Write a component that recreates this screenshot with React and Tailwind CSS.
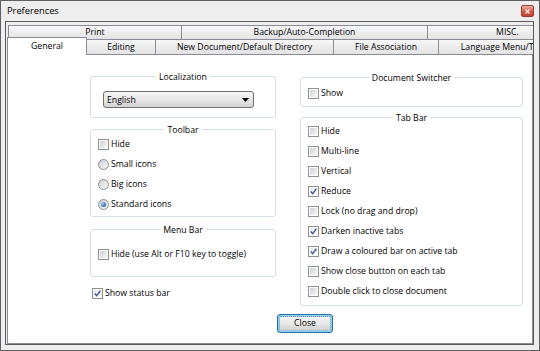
import React from "react";

function GroupBox({ title, className, children }) {
  return (
    <div className={"border border-[#d5dfe5] rounded-[3px] " + className}>
      <div className="-mt-[6px] mx-auto w-fit px-[3px] bg-white leading-[12px]">{title}</div>
      {children}
    </div>
  );
}

function Check({ checked }) {
  return (
    <span className="w-[11px] h-[11px] shrink-0 border border-[#8e8f8f] bg-white p-[1px] flex">
      <span
        className={
          "flex-1 flex items-center justify-center " +
          (checked
            ? "bg-linear-to-br from-[#e4e7ec] to-[#ffffff]"
            : "bg-linear-to-br from-[#cdd1d7] to-[#f8f8f8]")
        }
      >
        {checked && (
          <svg width="7" height="7" viewBox="0 0 7 7">
            <path d="M0.7 3.4 L2.6 5.6 L6.4 0.8" fill="none" stroke="#3d5790" strokeWidth="1.4" />
          </svg>
        )}
      </span>
    </span>
  );
}

function Radio({ checked }) {
  return (
    <span className="w-[11px] h-[11px] shrink-0 rounded-full border border-[#8e8f8f] bg-linear-to-br from-[#cbcfd5] to-[#fafafa] flex items-center justify-center">
      {checked && (
        <span className="w-[5px] h-[5px] rounded-full bg-[radial-gradient(circle_at_35%_35%,#a9d4fb,#1d58ad_75%)]" />
      )}
    </span>
  );
}

function Row({ control, children }) {
  return (
    <div className="h-[20px] flex items-center gap-[2px] whitespace-nowrap">
      {control}
      <span>{children}</span>
    </div>
  );
}

const tabBase =
  "shrink-0 border-t border-l border-[#898c95] bg-linear-to-b from-[#f7f7f7] to-[#e3e3e3] flex items-center justify-center whitespace-nowrap leading-none";

export default function App() {
  return (
    <div className="w-[540px] h-[351px] bg-[#eeeeee] border border-[#5f5f5f] pl-[4px] pr-[5px] pb-[5px] flex flex-col font-['Open_Sans',sans-serif] text-[8.7px] text-black leading-[12px]">
      {/* Title bar */}
      <div className="h-[20px] shrink-0 flex items-center justify-between pl-[2px]">
        <span className="text-[9.3px]">Preferences</span>
        <span className="w-[13px] h-[12px] rounded-[2px] border border-[#9c3a2e] bg-linear-to-b from-[#eab2a6] via-[#d4604f] to-[#c2412f] flex items-center justify-center">
          <svg width="5" height="5" viewBox="0 0 5 5">
            <path d="M0.5 0.5 L4.5 4.5 M4.5 0.5 L0.5 4.5" stroke="#fbe9e6" strokeWidth="1.3" />
          </svg>
        </span>
      </div>

      {/* Client area */}
      <div className="flex-1 min-h-0 border border-[#5a5a5a] overflow-hidden flex flex-col bg-[#eeeeee]">
        {/* Tab row 1 */}
        <div className="flex h-[14px] mt-[3px] pl-[2px] shrink-0">
          <div className={tabBase + " w-[173px]"}>Print</div>
          <div className={tabBase + " w-[246px]"}>Backup/Auto-Completion</div>
          <div className={tabBase + " w-[160px]"}>MISC.</div>
        </div>
        {/* Tab row 2 */}
        <div className="flex h-[15px] pl-[1px] shrink-0">
          <div className="relative z-10 shrink-0 self-start -mt-[2px] h-[18px] w-[80px] border-t border-l border-r border-[#898c95] bg-white flex items-center justify-center leading-none">
            General
          </div>
          <div className={tabBase + " -ml-[1px] w-[69px]"}>Editing</div>
          <div className={tabBase + " w-[178px]"}>New Document/Default Directory</div>
          <div className={tabBase + " w-[105px]"}>File Association</div>
          <div className={tabBase + " w-[162px]"}>Language Menu/Tab Settings</div>
        </div>

        {/* Tab page */}
        <div className="flex-1 min-h-0 ml-[1px] border border-[#898c95] bg-white flex flex-col">
          <div className="flex items-start pl-[82px] pt-[21px] gap-[24px]">
            {/* Left column */}
            <div className="w-[186px] flex flex-col">
              <GroupBox title="Localization" className="pb-[9px]">
                <div className="ml-[12px] mt-[8px] w-[151px] h-[17px] rounded-[3px] border border-[#707070] bg-linear-to-b from-[#f4f4f4] via-[#e8e8e8] to-[#d3d3d3] flex items-center justify-between pl-[3px] pr-[4px]">
                  <span>English</span>
                  <svg width="7" height="4" viewBox="0 0 7 4">
                    <path d="M0 0 H7 L3.5 4 Z" fill="#000" />
                  </svg>
                </div>
              </GroupBox>

              <GroupBox title="Toolbar" className="mt-[11px] pb-[2px]">
                <div className="-mt-[2px] pl-[7px]">
                  <Row control={<Check />}>Hide</Row>
                  <Row control={<Radio />}>Small icons</Row>
                  <Row control={<Radio />}>Big icons</Row>
                  <Row control={<Radio checked />}>Standard icons</Row>
                </div>
              </GroupBox>

              <GroupBox title="Menu Bar" className="mt-[12px] pb-[12px]">
                <div className="mt-[8px] pl-[7px]">
                  <Row control={<Check />}>Hide (use Alt or F10 key to toggle)</Row>
                </div>
              </GroupBox>

              <div className="mt-[6px] pl-[2px]">
                <Row control={<Check checked />}>Show status bar</Row>
              </div>
            </div>

            {/* Right column */}
            <div className="w-[223px] mt-[1px] flex flex-col">
              <GroupBox title="Document Switcher" className="pb-[3px]">
                <div className="-mt-[1px] pl-[7px]">
                  <Row control={<Check />}>Show</Row>
                </div>
              </GroupBox>

              <GroupBox title="Tab Bar" className="mt-[10px] pb-[4px]">
                <div className="-mt-[3px] pl-[7px]">
                  <Row control={<Check />}>Hide</Row>
                  <Row control={<Check />}>Multi-line</Row>
                  <Row control={<Check />}>Vertical</Row>
                  <Row control={<Check checked />}>Reduce</Row>
                  <Row control={<Check />}>Lock (no drag and drop)</Row>
                  <Row control={<Check checked />}>Darken inactive tabs</Row>
                  <Row control={<Check checked />}>Draw a coloured bar on active tab</Row>
                  <Row control={<Check />}>Show close button on each tab</Row>
                  <Row control={<Check />}>Double click to close document</Row>
                </div>
              </GroupBox>
            </div>
          </div>

          <div className="pl-[269px] mt-[8px]">
            <div className="w-[56px] h-[19px] rounded-[3px] border border-[#2c6fa6] p-[1px] bg-[#8fd3f0]">
              <div className="h-full rounded-[2px] border border-dotted border-[#3b8fc4] bg-linear-to-b from-[#f4f4f4] via-[#e9e9e9] to-[#d2d2d2] flex items-center justify-center leading-none">
                Close
              </div>
            </div>
          </div>
        </div>
      </div>
    </div>
  );
}
